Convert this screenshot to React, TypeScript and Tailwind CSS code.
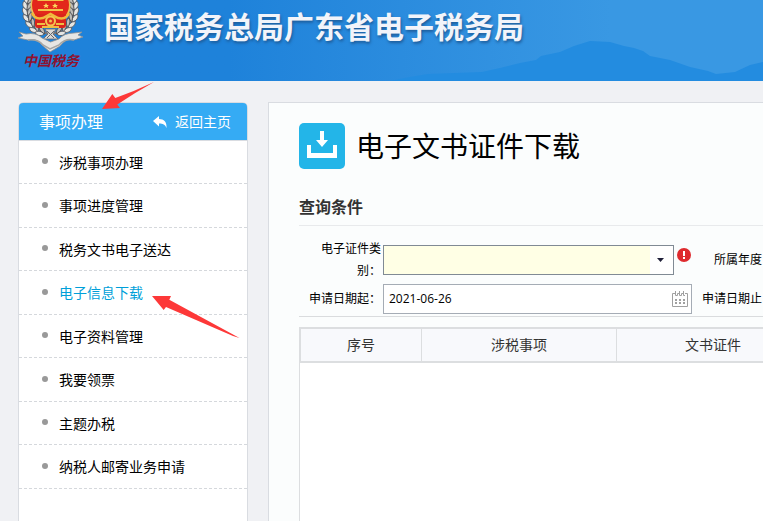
import { useState } from 'react';
import clsx from 'clsx';

const menuItems = [
  '涉税事项办理',
  '事项进度管理',
  '税务文书电子送达',
  '电子信息下载',
  '电子资料管理',
  '我要领票',
  '主题办税',
  '纳税人邮寄业务申请',
];

// Leaf positions for one side of the wreath, mirrored for the other side
const leaves = [
  { x: 10, y: 0, r: 8 },
  { x: 9, y: 6, r: 0 },
  { x: 9, y: 12, r: -8 },
  { x: 10, y: 18, r: -20 },
  { x: 13, y: 24, r: -34 },
  { x: 17, y: 29, r: -48 },
  { x: 23, y: 32, r: -62 },
];

function WreathSide() {
  return (
    <g>
      <path d="M12 -2 C6 12 11 27 30 34" fill="none" stroke="#77777a" strokeWidth="2" />
      {leaves.map((leaf) => (
        <g key={leaf.y} transform={`translate(${leaf.x} ${leaf.y}) rotate(${leaf.r})`}>
          <path d="M0 4 C-5 2 -5 -3 -3 -5 C0 -3 1 0 0 4Z" fill="#e6e6e3" stroke="#58585c" strokeWidth=".8" />
          <path d="M0 4 C0 -1 2 -4 5 -4 C5 0 3 3 0 4Z" fill="#bdbcb8" stroke="#48484d" strokeWidth=".8" />
        </g>
      ))}
    </g>
  );
}

function Emblem() {
  return (
    <svg width="66" height="53" viewBox="0 0 66 53" aria-hidden="true">
      <WreathSide />
      <g transform="translate(65 0) scale(-1 1)">
        <WreathSide />
      </g>
      <circle cx="32.5" cy="6" r="20" fill="#e9c25a" />
      <circle cx="32.5" cy="5" r="18.500" fill="#e3271b" />
      <path d="M17 14 h31 v11 q0 3 -3 3 h-25 q-3 0 -3 -3Z" fill="#d9241b" />
      <path d="M22 -2 h21 l3 3 h-27Z M20 9 h25 v2 h-25Z" fill="#f2c14a" />
      <path d="M28 3 l1 2 h2 l-1.5 1.2 .6 2 -2 -1.2 -2 1.2 .6 -2 -1.7 -1.2 h2Z M37 3 l1 2 h2 l-1.5 1.2 .6 2 -2 -1.2 -2 1.2 .6 -2 -1.7 -1.2 h2Z" fill="#fbd65d" />
      <path d="M14 13 q3 7 11 5 l7.500 -4 7.500 4 q8 2 11 -5" fill="none" stroke="#f0b93c" strokeWidth="2.500" />
      <circle cx="32.500" cy="21" r="4.500" fill="#dd3320" stroke="#f3c650" strokeWidth="2" />
      <circle cx="32.500" cy="21" r="1.500" fill="#f3c650" />
      <path d="M19 24 h8 M38 24 h8 M24 27 h17" fill="none" stroke="#efbd43" strokeWidth="2" />
      <path d="M27 29 h11 l-3 5 5 5 h-15 l5 -5Z" fill="#d8d8d6" stroke="#66666a" strokeWidth=".8" />
      <path d="M29 31 l7 7 M36 31 l-7 7" stroke="#66666a" strokeWidth="1" />
      <path d="M8 34 L1 32 L5 36 L0 38 L10 40 Q19 38 24 45 L32 52 L42 46 Q48 38 56 40 L65 37 L60 35 L64 32 L56 33 Q46 33 41 39 L32.500 42 L24 38 Q18 32 8 34Z" fill="#e6e6e4" stroke="#8d8f92" strokeWidth=".8" />
      <path d="M10 40 Q20 39 25 45 L32 49 L41 45 Q47 38 56 40" fill="none" stroke="#a5a5a3" strokeWidth="1.500" />
    </svg>
  );
}

function PageHeader() {
  return (
    <header className="relative h-[81px] overflow-hidden bg-linear-to-r from-[#1e82da] from-30% to-[#3998e3] to-80%">
      <svg className="absolute inset-0 size-full" viewBox="0 0 763 81" preserveAspectRatio="none" aria-hidden="true">
        <path d="M390 81 L410 77 L428 74 L455 73 L482 72 L500 68 L520 63 L536 60 L541 56 L560 52 L574 46 L590 41 L610 42 L624 46 L634 48 L643 51 L650 56 L670 60 L690 67 L708 71 L716 74 L735 72 L750 65 L763 62 V81Z" fill="#238ce0" />
      </svg>
      <div className="relative flex items-start pl-[18px] whitespace-nowrap">
        <div className="w-[66px] shrink-0">
          <Emblem />
          <div className="text-center text-sm leading-4 font-bold text-[#8f1230] italic">中国税务</div>
        </div>
        <div className="pt-[7px] pl-5 text-[30px] leading-10 font-bold text-[#f2f4fa] [text-shadow:1px_2px_3px_#1d5c9a]">
          国家税务总局广东省电子税务局
        </div>
      </div>
    </header>
  );
}

function Sidebar() {
  const [active, setActive] = useState('电子信息下载');

  return (
    <aside className="relative w-[230px] shrink-0 rounded-t-md border border-b-0 border-[#d9dce1] bg-white">
      <div className="flex h-[37px] items-center justify-between rounded-t bg-[#35abf4] pr-4 pl-5 text-white">
        <h2 className="text-base">事项办理</h2>
        <a href="#home" className="flex items-center gap-2 text-sm">
          <svg width="14" height="12" viewBox="0 0 14 12" fill="currentColor" aria-hidden="true">
            <path d="M0 5 L6 0 V3 C11 3 14 6 13.500 12 C12 8.500 10 7.500 6 7.500 V10.500Z" />
          </svg>
          返回主页
        </a>
      </div>
      <ul className="border-t border-[#d9dce1]">
        {menuItems.map((item) => (
          <li key={item} className="h-[43px] border-b border-dashed border-[#d5d8dc] even:h-[44px]">
            <a
              href="#menu"
              onClick={() => setActive(item)}
              className={clsx(
                'flex h-full items-center gap-[11px] pt-px pl-[23px] text-sm',
                item === active ? 'text-[#009fd9]' : 'text-black',
              )}
            >
              <span className="mb-[3px] size-[6px] rounded-full bg-[#999]" />
              {item}
            </a>
          </li>
        ))}
      </ul>

      {/* pointers over the menu */}
      <svg className="pointer-events-none absolute -top-[21px] left-[83px] z-10" width="54" height="28" viewBox="102 82 54 28" aria-hidden="true">
        <path d="M102 109 L112.300 94 L115.300 98 Q135 91 154 82 Q136 92 117.300 104.500 L120 108Z" fill="#fd3838" />
      </svg>
      <svg className="pointer-events-none absolute top-[193px] left-[133px] z-10" width="88" height="44" viewBox="152 296 88 44" aria-hidden="true">
        <path d="M152 296 L171 296 L169.300 299.700 L239.500 338 L233 336 L166 307 L163.700 310Z" fill="#fd3838" />
      </svg>
    </aside>
  );
}

function CalendarIcon() {
  return (
    <svg width="16" height="16" viewBox="0 0 16 16" aria-hidden="true">
      <path d="M3 2.500 H.5 V15.500 H15.500 V2.500 H13 M3.500 0 V4.500 H5.500 V2.500 H7.500 M7.500 0 V4.500 H9.500 V2.500 H11.500 M11.500 0 V4.500 H13" fill="none" stroke="#a0a0a0" />
      <path d="M3 8h2v2H3z M7 8h2v2H7z M11 8h2v2h-2z M3 11h2v2H3z M7 11h2v2H7z M11 11h2v2h-2z" fill="#a0a0a0" />
    </svg>
  );
}

function DateField({ id, value }: { id: string; value: string }) {
  return (
    <div className="my-[2px] flex h-[30px] items-center border border-[#a5acb5] bg-white pr-[3px]">
      <input id={id} defaultValue={value} className="min-w-0 flex-1 pl-[5px] outline-none" />
      <button type="button" aria-label="选择日期">
        <CalendarIcon />
      </button>
    </div>
  );
}

function SelectField({ id }: { id: string }) {
  return (
    <div className="flex items-start gap-[3px]">
      <div className="relative h-[30px] flex-1 border border-[#808a94] bg-white">
        <select id={id} className="h-full w-full appearance-none border-r-[23px] border-white bg-[#ffffe5] outline-none">
          <option value="" />
        </select>
        <svg className="pointer-events-none absolute top-3 right-[9px]" width="7" height="4" viewBox="0 0 7 4" aria-hidden="true">
          <path d="M0 0 H7 L3.500 4Z" fill="#1f1f38" />
        </svg>
      </div>
      <svg className="mt-[3px] mr-px" width="14" height="14" viewBox="0 0 14 14" aria-hidden="true">
        <circle cx="7" cy="7" r="7" fill="#de2a2e" />
        <path d="M6 3 h2 v5 h-2Z M6 9 h2 v2 h-2Z" fill="#fff" />
      </svg>
    </div>
  );
}

function QueryForm() {
  return (
    <form className="grid grid-cols-[84px_309px_84px_309px] items-center border-y border-t-[#e8eaec] border-b-[#dadcde] pt-3 text-xs leading-[22px] text-black">
      <label htmlFor="docType" className="pr-[2px] pl-4 text-right">电子证件类别：</label>
      <SelectField id="docType" />
      <label htmlFor="year" className="pr-[2px] text-right">所属年度：</label>
      <SelectField id="year" />
      <label htmlFor="dateFrom" className="pr-[2px] text-right">申请日期起：</label>
      <DateField id="dateFrom" value="2021-06-26" />
      <label htmlFor="dateTo" className="pr-[2px] text-right">申请日期止：</label>
      <DateField id="dateTo" value="2021-07-26" />
    </form>
  );
}

function ResultTable() {
  return (
    <div className="mt-[10px] flex-1 border border-b-0 border-[#dcdee0] bg-white">
      <table className="w-full table-fixed border-collapse text-sm text-[#333]">
        <thead>
          <tr className="h-[33px] border-t border-b-2 border-[#dcdee0] bg-[#f8f9fc]">
            <th className="w-[121px] border-x border-[#dcdee0] font-normal">序号</th>
            <th className="w-[195px] border-r border-[#dcdee0] font-normal">涉税事项</th>
            <th className="w-[193px] border-r border-[#dcdee0] font-normal">文书证件</th>
            <th className="font-normal">操作</th>
          </tr>
        </thead>
      </table>
    </div>
  );
}

export default function App() {
  return (
    <div className="flex h-screen flex-col overflow-hidden bg-[#f0f1f4] font-['Open_Sans','Noto_Sans_CJK_SC',sans-serif]">
      <PageHeader />
      <div className="flex min-h-0 flex-1 gap-5 pt-[21px] pl-[18px]">
        <Sidebar />
        <main className="min-w-0 flex-1 overflow-hidden border-t border-l border-[#d9dce1] bg-[#fbfdfd] pl-[30px]">
          {/* wider than a small window, the right side is cut off */}
          <div className="flex h-full w-full min-w-[786px] flex-col">
            <div className="flex items-center gap-[11px] pt-5">
              <svg width="46" height="46" viewBox="0 0 46 46" aria-hidden="true">
                <rect width="46" height="46" rx="5" fill="#23b5e8" />
                <path d="M21 8 h4 v9 h4 l-6 7 -6 -7 h4Z M8 22 h4 v8 h22 v-8 h4 v13 h-30Z" fill="#fff" />
              </svg>
              <h1 className="text-[28px] leading-10 text-black">电子文书证件下载</h1>
            </div>
            <h3 className="mt-[26px] mb-[6px] text-base leading-6 font-bold text-[#333]">查询条件</h3>
            <QueryForm />
            <ResultTable />
          </div>
        </main>
      </div>
    </div>
  );
}
